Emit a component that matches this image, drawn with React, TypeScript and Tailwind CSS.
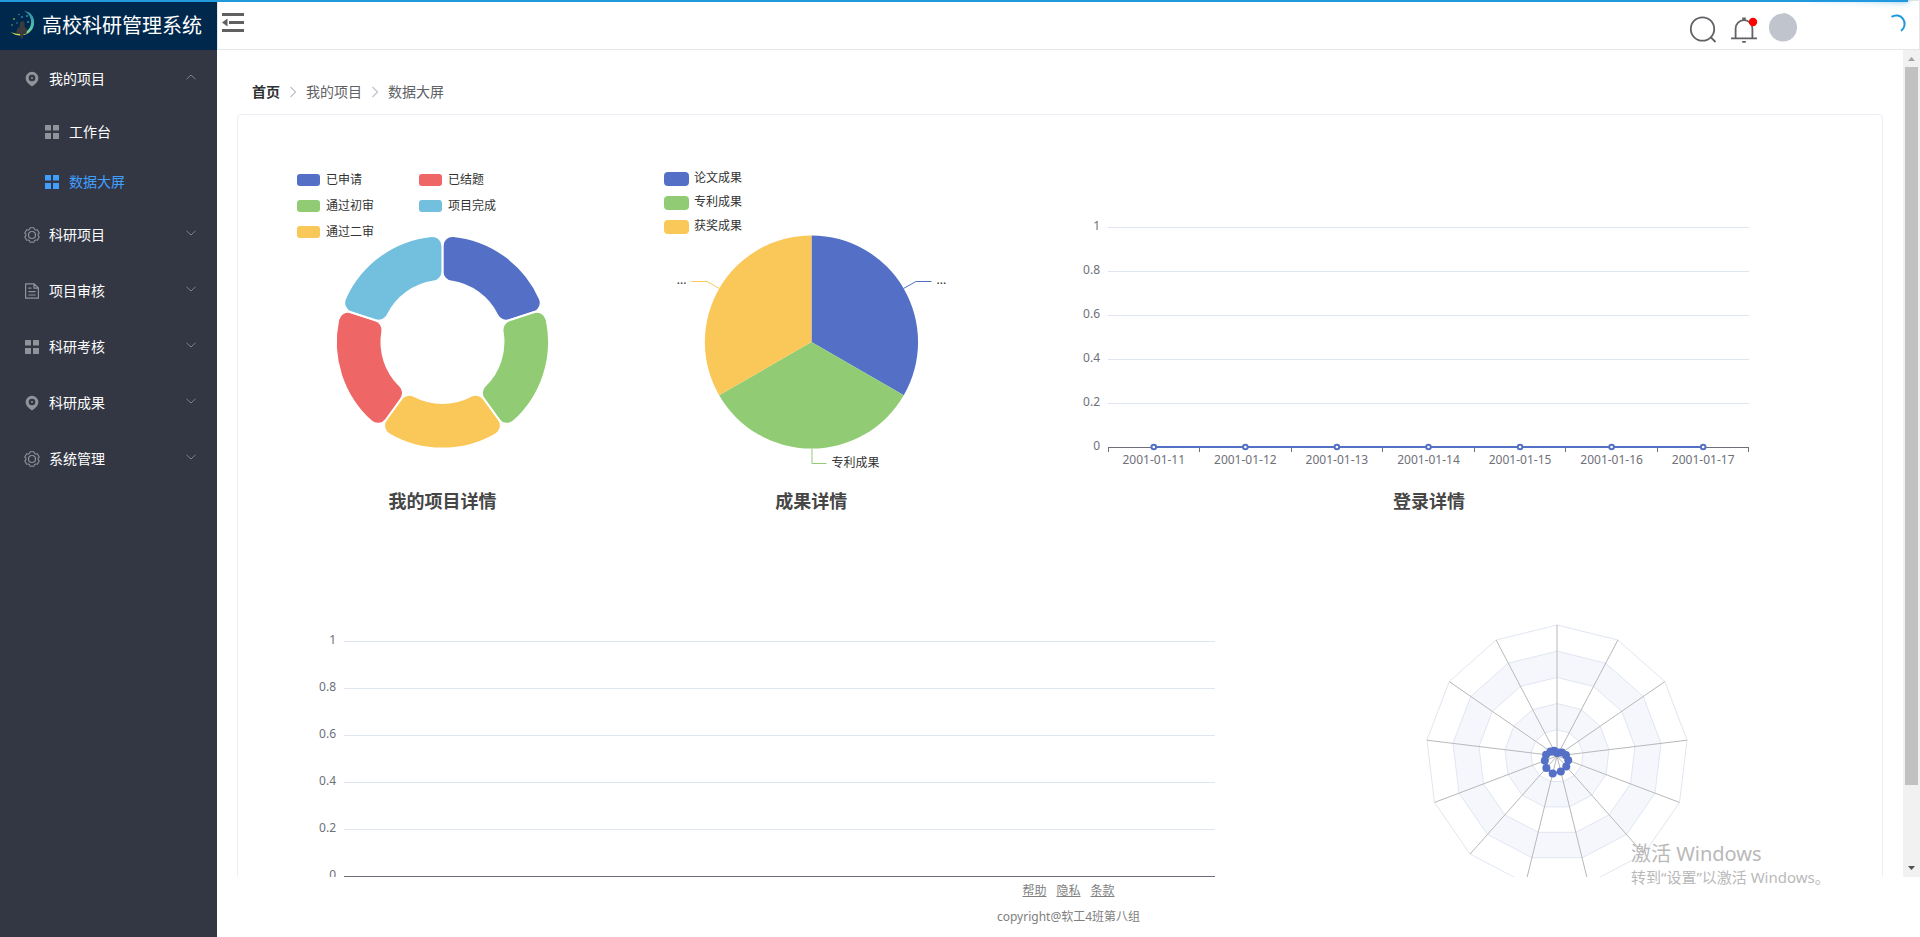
import type { ReactNode } from 'react'
import clsx from 'clsx'

type IconName = 'location' | 'menu' | 'setting' | 'document'

interface MenuItem {
  label: string
  icon: IconName
  open?: boolean
  children?: { label: string; active?: boolean }[]
}

interface LegendItem {
  label: string
  swatch: string
}

const menuItems: MenuItem[] = [
  {
    label: '我的项目',
    icon: 'location',
    open: true,
    children: [{ label: '工作台' }, { label: '数据大屏', active: true }]
  },
  { label: '科研项目', icon: 'setting' },
  { label: '项目审核', icon: 'document' },
  { label: '科研考核', icon: 'menu' },
  { label: '科研成果', icon: 'location' },
  { label: '系统管理', icon: 'setting' }
]

// listed column by column
const projectLegend: LegendItem[] = [
  { label: '已申请', swatch: 'bg-[#5470c6]' },
  { label: '通过初审', swatch: 'bg-[#91cc75]' },
  { label: '通过二审', swatch: 'bg-[#fac858]' },
  { label: '已结题', swatch: 'bg-[#ee6666]' },
  { label: '项目完成', swatch: 'bg-[#73c0de]' }
]

const resultLegend: LegendItem[] = [
  { label: '论文成果', swatch: 'bg-[#5470c6]' },
  { label: '专利成果', swatch: 'bg-[#91cc75]' },
  { label: '获奖成果', swatch: 'bg-[#fac858]' }
]

const palette = ['#5470c6', '#91cc75', '#fac858', '#ee6666', '#73c0de']
const ticks = ['1', '0.8', '0.6', '0.4', '0.2', '0']
const dates = ['2001-01-11', '2001-01-12', '2001-01-13', '2001-01-14', '2001-01-15', '2001-01-16', '2001-01-17']
const footerLinks = ['帮助', '隐私', '条款']

// distance of each radar point from the centre, counter-clockwise from the top
const radarValues = [3, 6, 8, 11, 13, 16, 18, 16, 14, 12, 9, 6, 4]

// angle is clockwise from 12 o'clock
const polar = (cx: number, cy: number, r: number, angle: number) =>
  `${(cx + r * Math.sin(angle)).toFixed(2)} ${(cy - r * Math.cos(angle)).toFixed(2)}`

const roundedSector = (c: number, R: number, r: number, start: number, end: number, k: number) => {
  const outer = Math.asin(k / (R - k))
  const inner = Math.asin(k / (r + k))
  const outerEdge = Math.sqrt((R - k) ** 2 - k ** 2)
  const innerEdge = Math.sqrt((r + k) ** 2 - k ** 2)
  return [
    `M${polar(c, c, outerEdge, start)}`,
    `A${k} ${k} 0 0 1 ${polar(c, c, R, start + outer)}`,
    `A${R} ${R} 0 0 1 ${polar(c, c, R, end - outer)}`,
    `A${k} ${k} 0 0 1 ${polar(c, c, outerEdge, end)}`,
    `L${polar(c, c, innerEdge, end)}`,
    `A${k} ${k} 0 0 1 ${polar(c, c, r, end - inner)}`,
    `A${r} ${r} 0 0 0 ${polar(c, c, r, start + inner)}`,
    `A${k} ${k} 0 0 1 ${polar(c, c, innerEdge, start)}`,
    'Z'
  ].join(' ')
}

// six rounded teeth joined by shallow dips
const gearPath =
  [0, 1, 2, 3, 4, 5]
    .map((i) => {
      const a = (i * Math.PI) / 3
      const move = i === 0 ? 'M' : 'L'
      return `${move}${polar(8, 8, 7.5, a - 0.26)}L${polar(8, 8, 7.5, a + 0.26)}Q${polar(8, 8, 4.8, a + Math.PI / 6)} ${polar(8, 8, 7.5, a + Math.PI / 3 - 0.26)}`
    })
    .join('') + 'Z'

const MenuIcon = ({ name }: { name: IconName }) => (
  <svg className="h-4 w-4 shrink-0" viewBox="0 0 16 16" fill="none" stroke="currentColor" aria-hidden="true">
    {name === 'location' && (
      <path
        d="M8 .8a6.4 6.4 0 0 0-6.4 6.4c0 3 2.4 5.4 6.4 8.4 4-3 6.4-5.4 6.4-8.4A6.4 6.4 0 0 0 8 .8Zm0 2.900a3.300 3.300 0 1 1 0 6.600 3.300 3.300 0 0 1 0-6.600Zm0 2.300a1 1 0 1 0 0 2 1 1 0 0 0 0-2Z"
        fill="currentColor"
        stroke="none"
        fillRule="evenodd"
      />
    )}
    {name === 'menu' && (
      <path
        d="M1.500 1h5a.5.5 0 0 1 .5.5v5H1v-5a.5.5 0 0 1 .5-.5Zm8 0h5a.5.5 0 0 1 .5.5v5H9V1.500A.5.5 0 0 1 9.500 1ZM1 9h6v6H1.500a.5.5 0 0 1-.5-.5Zm8 0h6v5.500a.5.5 0 0 1-.5.5H9Z"
        fill="currentColor"
        stroke="none"
      />
    )}
    {name === 'setting' && (
      <>
        <circle cx="8" cy="8" r="3.500" strokeWidth="1.200" />
        <path strokeLinejoin="round" strokeWidth="1.100" d={gearPath} />
      </>
    )}
    {name === 'document' && (
      <>
        <path strokeWidth="1.200" strokeLinejoin="round" d="M1.600.8h8.600l4.200 4.200v10.200H1.600ZM10 1v4.200h4.200" />
        <path strokeWidth="1.200" d="M4.400 5.200h3M4.400 8.600h7.200M4.400 12h7.200" />
      </>
    )}
  </svg>
)

const Chevron = ({ up }: { up?: boolean }) => (
  <svg
    className="mr-5 mb-1 ml-auto h-3 w-3 text-[#7f838c]"
    viewBox="0 0 12 12"
    fill="none"
    stroke="currentColor"
    aria-hidden="true"
  >
    <path d={up ? 'M1.500 8.200 6 4l4.500 4.200' : 'M1.500 3.800 6 8l4.500-4.200'} />
  </svg>
)

const Logo = () => (
  <svg className="mb-1 h-8 w-8" viewBox="0 0 32 32" aria-hidden="true">
    <defs>
      <linearGradient id="moon" x1="0.700" y1="0" x2="0.200" y2="1">
        <stop offset="0" stopColor="#2a8fa8" />
        <stop offset="0.500" stopColor="#5cc9b0" />
        <stop offset="1" stopColor="#e3e33a" />
      </linearGradient>
    </defs>
    <path d="M18 3C25 3.500 29 9 28 16.500 26.500 26 14 31.500 4.500 24c9 4 17.500 1 20-6C26.500 12 24 6 18 3Z" fill="url(#moon)" />
    <path d="M14 14.500l2.500-1.500 2 1v4.500l2.500 3-.5 4-3 1-1 4h-2l-.5-4.500-4-1 1.500-5 2-1Z" fill="#3b3a3d" />
    <g fill="#2f8fb0">
      <circle cx="8" cy="11" r=".9" fill="#8fae4a" />
      <circle cx="13" cy="6.500" r=".8" />
      <circle cx="16" cy="9" r=".9" />
      <circle cx="21" cy="8" r="1" />
      <circle cx="11" cy="15" r=".8" />
      <circle cx="22" cy="14" r="1" />
      <circle cx="6" cy="17" r=".8" fill="#7fae4a" />
    </g>
  </svg>
)

const Sidebar = () => (
  <aside className="flex w-[217px] shrink-0 flex-col bg-[#333744]">
    <div className="flex h-[50px] items-center gap-1 bg-[#00284d] pt-[2px] pl-[6px] text-white">
      <Logo />
      <h1 className="text-xl leading-6">高校科研管理系统</h1>
    </div>
    <nav className="pt-px text-sm text-white">
      <ul>
        {menuItems.map((item) => (
          <li key={item.label}>
            <button className="flex h-14 w-full items-center pl-6" aria-expanded={!!item.open}>
              <span className="text-[#909399]">
                <MenuIcon name={item.icon} />
              </span>
              <span className="ml-[9px]">{item.label}</span>
              <Chevron up={item.open} />
            </button>
            {item.children && (
              <ul>
                {item.children.map((child) => (
                  <li key={child.label}>
                    <a
                      href="#"
                      className={clsx('flex h-[50px] items-center gap-[9px] pl-11', child.active && 'text-[#409eff]')}
                    >
                      <span className={child.active ? 'text-[#409eff]' : 'text-[#909399]'}>
                        <MenuIcon name="menu" />
                      </span>
                      {child.label}
                    </a>
                  </li>
                ))}
              </ul>
            )}
          </li>
        ))}
      </ul>
    </nav>
  </aside>
)

const Header = () => (
  <header className="flex h-[50px] shrink-0 justify-between border border-[#e6e6e6] pl-1">
    <button className="h-11 w-6 text-[#5f6062]" aria-label="收起菜单">
      <svg className="h-6 w-6" viewBox="0 0 24 24" fill="currentColor" aria-hidden="true">
        <path d="M0 2h22v3H0Zm7 8h15v3H7ZM0 18h22v3H0ZM5.500 7.500v8L0 11.500Z" />
      </svg>
    </button>
    <div className="flex items-start pt-3">
      <button className="text-[#606266]" aria-label="搜索">
        <svg className="h-8 w-7" viewBox="0 0 28 32" fill="none" stroke="currentColor" strokeWidth="1.800" aria-hidden="true">
          <circle cx="13.500" cy="16" r="11.700" />
          <path d="m21.500 24 5 5" />
        </svg>
      </button>
      <button className="ml-3 text-[#606266]" aria-label="通知">
        <svg className="h-8 w-8" viewBox="0 0 32 32" fill="none" stroke="currentColor" strokeWidth="1.800" aria-hidden="true">
          <path d="M2 25.300h26M6.600 25v-9.500a8.400 8.400 0 0 1 16.800 0V25M13.200 5.500h3.600M13.200 28.800h3.600" />
          <circle cx="24" cy="9" r="4.200" fill="#f00" stroke="none" />
        </svg>
      </button>
      <svg className="ml-[6px] h-8 w-8" viewBox="0 0 32 32" aria-hidden="true">
        <path d="M16 .2c3 0 6 1 8 3.500-2.500-1.700-5-2.500-8-3Z" fill="#7fc98a" />
        <circle cx="16" cy="14.500" r="14" fill="#c0c4cc" />
      </svg>
      <svg className="mr-[11px] ml-[85px] h-6 w-6" viewBox="0 0 24 24" fill="none" stroke="#2299dd" strokeWidth="2" aria-hidden="true">
        <path d="M7.500 3.900A8 8 0 0 1 17 17.800" />
      </svg>
    </div>
  </header>
)

const Breadcrumb = () => (
  <nav className="flex items-center gap-2 pl-[15px] text-sm leading-4 text-[#606266]" aria-label="面包屑">
    <a href="#" className="font-bold text-[#303133]">
      首页
    </a>
    <CrumbArrow />
    <span>我的项目</span>
    <CrumbArrow />
    <span>数据大屏</span>
  </nav>
)

const CrumbArrow = () => (
  <svg className="h-3 w-[10px]" viewBox="0 0 10 12" fill="none" stroke="#c0c4cc" strokeWidth="1.300" aria-hidden="true">
    <path d="m2.500 1 5 5-5 5" />
  </svg>
)

const ChartTitle = ({ children }: { children: ReactNode }) => (
  <h2 className="text-center text-lg leading-6 font-bold text-[#464646]">{children}</h2>
)

const DonutChart = () => (
  <section className="flex w-[23%] flex-col pt-[39px]">
    <ul className="grid grid-flow-col grid-rows-3 gap-y-[14px] self-start pl-[39px] text-xs leading-3 text-[#333]">
      {projectLegend.map((item) => (
        <li key={item.label} className="flex h-3 w-[122px] gap-[6px]">
          <span className={clsx('h-3 w-[23px] rounded-[3px]', item.swatch)} />
          {item.label}
        </li>
      ))}
    </ul>
    <svg className="-mt-[3px] h-[214px] w-full" viewBox="0 0 214 214" role="img" aria-label="我的项目详情">
      {palette.map((color, i) => (
        <path
          key={color}
          d={roundedSector(107, 106.6, 61, (i * Math.PI * 2) / 5, ((i + 1) * Math.PI * 2) / 5, 10)}
          fill={color}
          stroke="#fff"
          strokeWidth="2"
        />
      ))}
    </svg>
    <div className="mt-10">
      <ChartTitle>我的项目详情</ChartTitle>
    </div>
  </section>
)

const PieChart = () => (
  <section className="flex w-[23%] flex-col pt-[37px]">
    <ul className="flex flex-col gap-[10px] self-start pl-[37px] text-xs leading-3 text-[#333]">
      {resultLegend.map((item) => (
        <li key={item.label} className="flex h-[14px] gap-[5px]">
          <span className={clsx('h-[14px] w-[25px] rounded-[4px]', item.swatch)} />
          {item.label}
        </li>
      ))}
    </ul>
    <svg className="h-[240px] w-full" viewBox="0 0 280 240" role="img" aria-label="成果详情">
      {[0, 1, 2].map((i) => (
        <path
          key={i}
          d={`M140 108L${polar(140, 108, 106.6, (i * Math.PI * 2) / 3)}A106.6 106.6 0 0 1 ${polar(140, 108, 106.6, ((i + 1) * Math.PI * 2) / 3)}Z`}
          fill={palette[i]}
        />
      ))}
      <g fill="none">
        <path d="M232 54.500l12.500-7H260" stroke="#5470c6" />
        <path d="M140.500 214.500v15H155" stroke="#91cc75" />
        <path d="M48 54.500l-12.500-7H20" stroke="#fac858" />
      </g>
      <g fontSize="12" fill="#333">
        <text x="265" y="50">...</text>
        <text x="160" y="233">专利成果</text>
        <text x="15" y="50" textAnchor="end">...</text>
      </g>
    </svg>
    <div className="mt-[15px]">
      <ChartTitle>成果详情</ChartTitle>
    </div>
  </section>
)

const AxisGrid = ({ step }: { step: number }) => (
  <g fontSize="12" fill="#6e7079">
    {ticks.map((tick, i) => (
      <g key={tick}>
        <text x="-8" y={i * step + 13} textAnchor="end">
          {tick}
        </text>
        <line
          x1="0"
          x2="100%"
          y1={i * step + 10}
          y2={i * step + 10}
          stroke={tick === '0' ? '#6e7079' : '#e0e6f1'}
          shapeRendering="crispEdges"
        />
      </g>
    ))}
  </g>
)

const LineChart = () => (
  <section className="flex w-[54%] flex-col pt-[82px]">
    <div className="px-[13%]">
      <svg className="h-[250px] w-full overflow-visible" role="img" aria-label="登录详情">
        <AxisGrid step={44} />
        {[...dates, 'end'].map((date, i) => (
          <line
            key={date}
            x1={`${(i / 7) * 100}%`}
            x2={`${(i / 7) * 100}%`}
            y1="230"
            y2="235"
            stroke="#6e7079"
            shapeRendering="crispEdges"
          />
        ))}
        <line x1={`${50 / 7}%`} x2={`${650 / 7}%`} y1="230" y2="230" stroke="#5470c6" strokeWidth="2" />
        {dates.map((date, i) => (
          <g key={date}>
            <circle cx={`${((i + 0.5) / 7) * 100}%`} cy="230" r="2.300" fill="#fff" stroke="#5470c6" strokeWidth="2" />
            <text x={`${((i + 0.5) / 7) * 100}%`} y="247" textAnchor="middle" fontSize="12" fill="#6e7079">
              {date}
            </text>
          </g>
        ))}
      </svg>
    </div>
    <div className="mt-[22px]">
      <ChartTitle>登录详情</ChartTitle>
    </div>
  </section>
)

const BarChart = () => (
  <section className="w-[65%] px-[86px] pt-[8px]">
    <svg className="h-[260px] w-full overflow-visible">
      <AxisGrid step={47} />
    </svg>
  </section>
)

const RadarChart = () => {
  const angles = radarValues.map((_, i) => (-i * Math.PI * 2) / 13)
  const ring = (r: number) => angles.map((angle) => polar(132, 132, r, angle)).join(' ')

  return (
    <section className="flex w-[32%] justify-center pt-px">
      <svg className="h-[264px] w-[264px]" viewBox="0 0 264 264">
        {[5, 4, 3, 2, 1].map((level) => (
          <polygon key={level} points={ring(level * 26.2)} fill={level % 2 ? '#fff' : '#f5f7fc'} stroke="#e0e6f1" />
        ))}
        {angles.map((angle, i) => (
          <path key={i} d={`M132 132L${polar(132, 132, 131, angle)}`} stroke="#b8b8b8" />
        ))}
        <polygon
          points={radarValues.map((value, i) => polar(132, 132, value, angles[i])).join(' ')}
          fill="none"
          stroke="#5470c6"
          strokeWidth="2"
        />
        {radarValues.map((value, i) => {
          const [x, y] = polar(132, 132, value, angles[i]).split(' ')
          return <circle key={i} cx={x} cy={y} r="4" fill="#5470c6" />
        })}
      </svg>
    </section>
  )
}

const Scrollbar = () => (
  <div className="flex w-[17px] shrink-0 flex-col items-center bg-[#f1f1f1]" aria-hidden="true">
    <svg className="h-[17px] w-[17px] shrink-0" viewBox="0 0 17 17">
      <path d="M5 11h7L8.500 7Z" fill="#a3a3a3" />
    </svg>
    <div className="flex w-[13px] flex-1 flex-col">
      <div className="h-[90.5%] bg-[#c1c1c1]" />
    </div>
    <svg className="h-[17px] w-[17px] shrink-0" viewBox="0 0 17 17">
      <path d="M5 6h7l-3.500 4Z" fill="#505050" />
    </svg>
  </div>
)

const Footer = () => (
  <footer className="flex h-[60px] shrink-0 flex-col items-center gap-[10px] pt-[6px] text-xs leading-4 text-[#808080]">
    <div className="flex gap-[10px]">
      {footerLinks.map((link) => (
        <a key={link} href="#" className="underline">
          {link}
        </a>
      ))}
    </div>
    <p>copyright@软工4班第八组</p>
  </footer>
)

export default function App() {
  return (
    <div className="relative flex h-screen overflow-hidden bg-white font-['Noto_Sans','Noto_Sans_CJK_SC',sans-serif]">
      <Sidebar />
      <div className="flex min-w-0 flex-1 flex-col">
        <Header />
        <div className="flex min-h-0 flex-1">
          <main className="min-w-0 flex-1 overflow-hidden px-5 pt-[34px]">
            <Breadcrumb />
            <div className="mt-[14px] rounded border border-[#ebeef5] p-5">
              <div className="flex h-[488px]">
                <DonutChart />
                <PieChart />
                <LineChart />
              </div>
              <div className="flex pb-28">
                <BarChart />
                <RadarChart />
              </div>
            </div>
          </main>
          <Scrollbar />
        </div>
        <Footer />
      </div>

      {/* page loading bar */}
      <div className="absolute top-0 left-0 h-[2px] w-[99.4%] bg-[#2299dd]">
        <div className="absolute right-0 h-full w-[100px] -translate-y-1 rotate-3 shadow-[0_0_10px_#2299dd,0_0_5px_#2299dd]" />
      </div>

      <div className="pointer-events-none absolute right-[89px] bottom-[51px] w-[200px] text-[#b9b9b9]">
        <p className="text-xl leading-7">激活 Windows</p>
        <p className="text-[15px] leading-[18px] whitespace-nowrap">转到“设置”以激活 Windows。</p>
      </div>
    </div>
  )
}
